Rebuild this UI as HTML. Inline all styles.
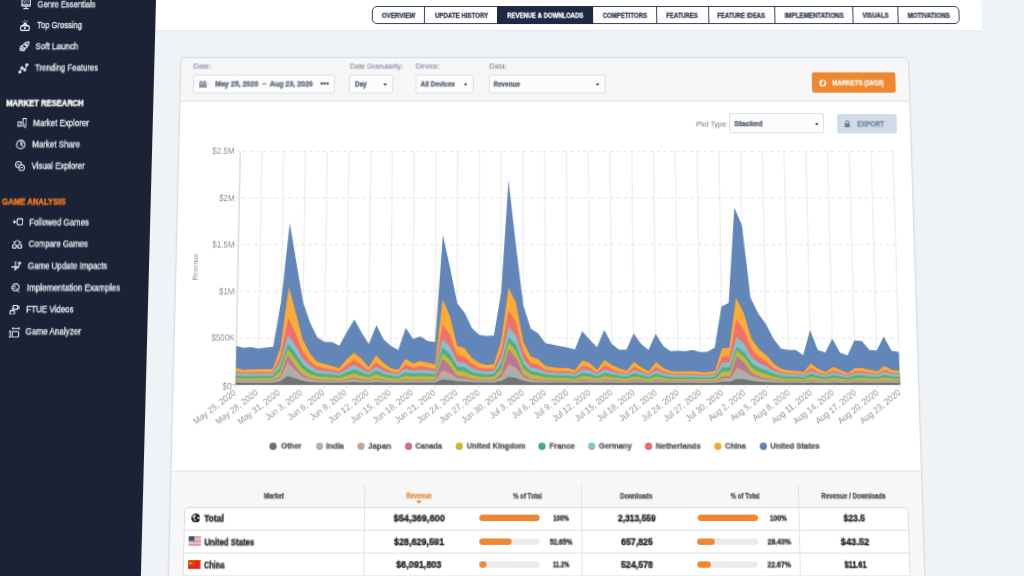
<!DOCTYPE html>
<html lang="en"><head><meta charset="utf-8"><title>Revenue &amp; Downloads</title>
<style>
html,body{margin:0;padding:0;width:1024px;height:576px;overflow:hidden;background:#eff3f6;}
body{font-family:"Liberation Sans",Arial,sans-serif;position:relative;}
#stage{position:absolute;left:0;top:0;width:1100px;height:640px;transform-origin:0 0;transform:matrix3d(1,0,0,0,-0.03826900,1,0,-0.00007700,0,0,1,0,0,0,0,1);background:#eff3f6;overflow:visible;filter:blur(0.2px);}
#stage div,#stage .a{position:absolute;box-sizing:border-box;}
.t{position:absolute;left:0;top:0;white-space:nowrap;transform-origin:0 50%;will-change:transform;display:block;margin:0;padding:0;}
</style></head><body>
<div id="stage">
<nav aria-label="Main navigation">
<div style="left:-10px;top:-10px;width:166px;height:670px;background:#1b2236;"></div>
<span class="t" style="transform:translate(37.65px,-1.64px) scaleX(0.7707);font-size:9.90px;line-height:11.88px;font-weight:400;color:#f8f9fb;-webkit-text-stroke:0.3px #f6f7fa;">Genre Essentials</span>
<span class="t" style="transform:translate(37.99px,19.07px) scaleX(0.7695);font-size:9.88px;line-height:11.86px;font-weight:400;color:#f8f9fb;-webkit-text-stroke:0.3px #f6f7fa;">Top Grossing</span>
<span class="t" style="transform:translate(37.14px,40.16px) scaleX(0.8119);font-size:9.86px;line-height:11.84px;font-weight:400;color:#f8f9fb;-webkit-text-stroke:0.3px #f6f7fa;">Soft Launch</span>
<span class="t" style="transform:translate(37.33px,61.34px) scaleX(0.7830);font-size:9.85px;line-height:11.82px;font-weight:400;color:#f8f9fb;-webkit-text-stroke:0.3px #f6f7fa;">Trending Features</span>
<span class="t" style="transform:translate(37.40px,115.87px) scaleX(0.8004);font-size:9.81px;line-height:11.77px;font-weight:400;color:#f8f9fb;-webkit-text-stroke:0.3px #f6f7fa;">Market Explorer</span>
<span class="t" style="transform:translate(37.29px,136.68px) scaleX(0.8060);font-size:9.79px;line-height:11.75px;font-weight:400;color:#f8f9fb;-webkit-text-stroke:0.3px #f6f7fa;">Market Share</span>
<span class="t" style="transform:translate(37.49px,157.67px) scaleX(0.7997);font-size:9.78px;line-height:11.73px;font-weight:400;color:#f8f9fb;-webkit-text-stroke:0.3px #f6f7fa;">Visual Explorer</span>
<span class="t" style="transform:translate(37.15px,212.52px) scaleX(0.8047);font-size:9.73px;line-height:11.68px;font-weight:400;color:#f8f9fb;-webkit-text-stroke:0.3px #f6f7fa;">Followed Games</span>
<span class="t" style="transform:translate(37.39px,233.30px) scaleX(0.7832);font-size:9.72px;line-height:11.66px;font-weight:400;color:#f8f9fb;-webkit-text-stroke:0.3px #f6f7fa;">Compare Games</span>
<span class="t" style="transform:translate(37.24px,254.44px) scaleX(0.8036);font-size:9.70px;line-height:11.64px;font-weight:400;color:#f8f9fb;-webkit-text-stroke:0.3px #f6f7fa;">Game Update Impacts</span>
<span class="t" style="transform:translate(36.99px,275.47px) scaleX(0.8209);font-size:9.69px;line-height:11.62px;font-weight:400;color:#f8f9fb;-webkit-text-stroke:0.3px #f6f7fa;">Implementation Examples</span>
<span class="t" style="transform:translate(37.22px,296.09px) scaleX(0.8068);font-size:9.67px;line-height:11.60px;font-weight:400;color:#f8f9fb;-webkit-text-stroke:0.3px #f6f7fa;">FTUE Videos</span>
<span class="t" style="transform:translate(37.32px,317.18px) scaleX(0.8217);font-size:9.65px;line-height:11.58px;font-weight:400;color:#f8f9fb;-webkit-text-stroke:0.3px #f6f7fa;">Game Analyzer</span>
<span class="t" style="transform:translate(10.13px,97.20px) scaleX(0.8093);font-size:9.33px;line-height:11.19px;font-weight:700;color:#ffffff;-webkit-text-stroke:0.37px #ffffff;-webkit-text-stroke:0.5px #fff;">MARKET RESEARCH</span>
<span class="t" style="transform:translate(9.63px,193.52px) scaleX(0.8250);font-size:9.26px;line-height:11.11px;font-weight:700;color:#f47b20;-webkit-text-stroke:0.37px #f47b20;-webkit-text-stroke:0.5px #f47b20;">GAME ANALYSIS</span>
<svg class="a" style="left:20.76px;top:-1.03px;" width="10.65" height="10.64" viewBox="0 0 20 20" preserveAspectRatio="none"><g fill="none" stroke="#f1f2f7" stroke-width="2.3" stroke-linecap="round" stroke-linejoin="round" opacity="0.88"><rect x="2" y="1" width="16" height="12.5" rx="1.5"/><path d="M2.5 11h15" stroke-width="2.6"/><path d="M10 13.5v4M6 18.2h8"/><path d="M5 4l3 2-3 2M9 4h2M13 4l2 2-2 2M9 8h2" stroke-width="1.2"/></g></svg>
<svg class="a" style="left:21.13px;top:19.87px;" width="9.98" height="10.96" viewBox="0 0 20 20" preserveAspectRatio="none"><g fill="none" stroke="#f1f2f7" stroke-width="2.3" stroke-linecap="round" stroke-linejoin="round" opacity="1"><rect x="1.5" y="10.5" width="17" height="8.5" rx="2.2"/><circle cx="10" cy="14.8" r="2" fill="#f1f2f7" stroke="none"/><path d="M5.5 10l4.5-5 4.5 5M10 5v3"/><path d="M5 2.5l.8 1M14 1.5l-.5 1.5M9.5 0.8v.8" stroke-width="1.4"/></g></svg>
<svg class="a" style="left:20.91px;top:41.17px;" width="10.36" height="10.52" viewBox="0 0 20 20" preserveAspectRatio="none"><g fill="none" stroke="#f1f2f7" stroke-width="2.2" stroke-linecap="round" stroke-linejoin="round" opacity="1"><path d="M18.5 1.5C12 1.500 7.500 5 5.500 10.500L9.500 14.500C15 12.500 18.500 8 18.500 1.500Z"/><circle cx="12.800" cy="7.200" r="1.700"/><path d="M6.500 8.500L2 10.500l1.500 3M11.500 13.500L9.500 18l-3-1.500M2 18l3.500-3.500M1.500 14.500l1-1M5.500 18.500l1-1"/></g></svg>
<svg class="a" style="left:21.39px;top:62.50px;" width="9.65" height="10.29" viewBox="0 0 20 20" preserveAspectRatio="none"><g fill="none" stroke="#f1f2f7" stroke-width="1.2" stroke-linecap="round" stroke-linejoin="round" opacity="1"><path d="M3 17l4-8.500 6 4.500 4-10" stroke-width="2"/><circle cx="3" cy="17" r="2.500" fill="#f1f2f7"/><circle cx="7" cy="8.500" r="2.300" fill="#f1f2f7"/><circle cx="13" cy="13" r="2.300" fill="#f1f2f7"/><circle cx="17" cy="3" r="2.500" fill="#f1f2f7"/></g></svg>
<svg class="a" style="left:21.52px;top:117.23px;" width="9.31" height="10.01" viewBox="0 0 20 20" preserveAspectRatio="none"><g fill="none" stroke="#f1f2f7" stroke-width="2.2" stroke-linecap="round" stroke-linejoin="round" opacity="1"><rect x="1" y="7.500" width="6" height="8.500"/><path d="M11.500 9V1h7.500v15h-3"/><circle cx="10.400" cy="12.500" r="3.400" fill="#1b2236" stroke-width="1.900"/><path d="M13 15.300l4.500 4.200" stroke-width="2"/></g></svg>
<svg class="a" style="left:20.90px;top:138.02px;" width="10.09" height="9.98" viewBox="0 0 20 20" preserveAspectRatio="none"><g fill="none" stroke="#f1f2f7" stroke-width="2.2" stroke-linecap="round" stroke-linejoin="round" opacity="1"><circle cx="10" cy="10" r="8.200"/><path d="M10 3.500v6.500l4 3.500M10 10l4.500-4.500" stroke-width="2"/></g></svg>
<svg class="a" style="left:21.08px;top:158.93px;" width="10.07" height="9.94" viewBox="0 0 20 20" preserveAspectRatio="none"><g fill="none" stroke="#f1f2f7" stroke-width="2.1" stroke-linecap="round" stroke-linejoin="round" opacity="1"><rect x="1.500" y="1.500" width="11" height="11" rx="3.500"/><rect x="8" y="8" width="10.500" height="10.500" rx="3.500" fill="#1b2236"/><path d="M4 8l2-2.500 2 2M11 14l1.500-2 1.500 2 1.500-1.500" stroke-width="1.500"/></g></svg>
<svg class="a" style="left:20.95px;top:213.39px;" width="10.32" height="10.15" viewBox="0 0 20 20" preserveAspectRatio="none"><g fill="none" stroke="#f1f2f7" stroke-width="2.3" stroke-linecap="round" stroke-linejoin="round" opacity="1"><path d="M0.800 10h4.400M3 7.800v4.400" stroke-width="2.2"/><rect x="8" y="4.300" width="11" height="11.400" rx="3" stroke-width="2.3"/></g></svg>
<svg class="a" style="left:20.95px;top:235.16px;" width="10.11" height="9.25" viewBox="0 0 20 20" preserveAspectRatio="none"><g fill="none" stroke="#f1f2f7" stroke-width="2.3" stroke-linecap="round" stroke-linejoin="round" opacity="1"><rect x="1.200" y="11" width="7.400" height="7.600" rx="3.200"/><rect x="11.400" y="11" width="7.400" height="7.600" rx="3.200"/><path d="M4.500 7C5.500 0.500 14.500 0.500 15.500 7M4.500 7.200l-2.200-2M4.500 7.200l2.600-1.200M15.500 7.200l2.200-2M15.500 7.200l-2.600-1.200" stroke-width="1.700"/></g></svg>
<svg class="a" style="left:21.15px;top:256.05px;" width="9.51" height="9.41" viewBox="0 0 20 20" preserveAspectRatio="none"><g fill="none" stroke="#f1f2f7" stroke-width="2.3" stroke-linecap="round" stroke-linejoin="round" opacity="1"><path d="M8.500 1v18M0.800 12h14.500" stroke-width="2.300"/><path d="M8.500 16.500C14 14.500 17 9 17 2.500M17 1.800l-3 3M17 1.800l2.600 3.200" stroke-width="2.200"/></g></svg>
<svg class="a" style="left:21.25px;top:276.96px;" width="9.59" height="9.57" viewBox="0 0 20 20" preserveAspectRatio="none"><g fill="none" stroke="#f1f2f7" stroke-width="2.1" stroke-linecap="round" stroke-linejoin="round" opacity="1"><path d="M6 2.500l6-1.500 5 4 .5 6-4.500 4.500-6.500-.5-4-5z"/><path d="M6 6.500l3 1 1-2.500M5.500 11l3.500-.5M11.500 10.500l7 8" stroke-width="1.700"/></g></svg>
<svg class="a" style="left:21.35px;top:297.72px;" width="9.67" height="9.73" viewBox="0 0 20 20" preserveAspectRatio="none"><g fill="none" stroke="#f1f2f7" stroke-width="2.2" stroke-linecap="round" stroke-linejoin="round" opacity="1"><rect x="6.500" y="1" width="9.500" height="7.500" rx="2"/><path d="M16 3.500l3-1.500v6l-3-1.500" stroke-width="1.600"/><rect x="1" y="11" width="9" height="7.500" rx="2"/><path d="M4.500 11C4.500 7.500 6 6 8 5.500" stroke-width="1.600"/></g></svg>
<svg class="a" style="left:21.37px;top:318.87px;" width="10.34" height="10.27" viewBox="0 0 20 20" preserveAspectRatio="none"><g fill="none" stroke="#f1f2f7" stroke-width="2.3" stroke-linecap="round" stroke-linejoin="round" opacity="1"><path d="M0.600 8h3.600M2.400 8v11M0.600 19h3.600" stroke-width="1.800"/><rect x="6.300" y="8.200" width="12.400" height="10.600" rx="2.800" stroke-width="2"/><path d="M7.300 2.600h12M7.300 0.600v4M19.300 0.600v4" stroke-width="1.700"/></g></svg>
</nav>
<header>
<div  style="left:156.27px;top:-2.00px;width:824.51px;height:32.03px;background:#fff;box-shadow:0 1px 1.5px rgba(100,110,130,.07);"></div>
<div  style="left:372.44px;top:5.90px;width:586.83px;height:17.76px;border:1px solid #39425c;border-radius:5px;background:#fff;"></div>
<div  style="left:497.20px;top:5.90px;width:96.19px;height:17.76px;background:#1f2943;"></div>
<div  style="left:424.38px;top:6.50px;width:1.00px;height:16.46px;background:#39425c;"></div>
<div  style="left:656.02px;top:6.50px;width:1.00px;height:16.46px;background:#39425c;"></div>
<div  style="left:707.76px;top:6.50px;width:1.00px;height:16.46px;background:#39425c;"></div>
<div  style="left:774.19px;top:6.50px;width:1.00px;height:16.46px;background:#39425c;"></div>
<div  style="left:852.40px;top:6.50px;width:1.00px;height:16.46px;background:#39425c;"></div>
<div  style="left:897.35px;top:6.50px;width:1.00px;height:16.46px;background:#39425c;"></div>
<span class="t" style="transform:translate(381.87px,11.81px) scaleX(0.9326);font-size:6.69px;line-height:8.03px;font-weight:700;color:#2b3450;-webkit-text-stroke:0.27px #2b3450;">OVERVIEW</span>
<span class="t" style="transform:translate(435.08px,11.81px) scaleX(0.9133);font-size:6.69px;line-height:8.03px;font-weight:700;color:#2b3450;-webkit-text-stroke:0.27px #2b3450;">UPDATE HISTORY</span>
<span class="t" style="transform:translate(507.19px,11.74px) scaleX(0.8888);font-size:6.69px;line-height:8.03px;font-weight:700;color:#ffffff;-webkit-text-stroke:0.27px #ffffff;">REVENUE &amp; DOWNLOADS</span>
<span class="t" style="transform:translate(602.57px,11.81px) scaleX(0.9076);font-size:6.69px;line-height:8.03px;font-weight:700;color:#2b3450;-webkit-text-stroke:0.27px #2b3450;">COMPETITORS</span>
<span class="t" style="transform:translate(666.09px,11.81px) scaleX(0.8869);font-size:6.69px;line-height:8.03px;font-weight:700;color:#2b3450;-webkit-text-stroke:0.27px #2b3450;">FEATURES</span>
<span class="t" style="transform:translate(717.03px,11.81px) scaleX(0.8919);font-size:6.69px;line-height:8.03px;font-weight:700;color:#2b3450;-webkit-text-stroke:0.27px #2b3450;">FEATURE IDEAS</span>
<span class="t" style="transform:translate(784.36px,11.72px) scaleX(0.9241);font-size:6.69px;line-height:8.03px;font-weight:700;color:#2b3450;-webkit-text-stroke:0.27px #2b3450;">IMPLEMENTATIONS</span>
<span class="t" style="transform:translate(861.96px,11.60px) scaleX(0.9047);font-size:6.69px;line-height:8.03px;font-weight:700;color:#2b3450;-webkit-text-stroke:0.27px #2b3450;">VISUALS</span>
<span class="t" style="transform:translate(907.20px,11.81px) scaleX(0.9245);font-size:6.69px;line-height:8.03px;font-weight:700;color:#2b3450;-webkit-text-stroke:0.27px #2b3450;">MOTIVATIONS</span>
</header>
<main>
<div style="left:182.4px;top:56.8px;width:724.3px;height:600px;background:#fff;border:1px solid #d9dee4;border-radius:6px 6px 0 0;box-shadow:0 0 2px rgba(120,140,160,.18);overflow:hidden;"><div style="left:0;top:0;width:100%;height:43.3px;background:#f7f7f7;border-bottom:1px solid #e3e5e8;"></div><div style="left:0;top:396.3px;width:100%;height:300px;background:#f7f7f7;border-top:1px solid #e3e5e8;"></div></div>
<span class="t" style="transform:translate(194.85px,62.27px) scaleX(1.1639);font-size:6.37px;line-height:7.64px;font-weight:400;color:#66758a;">Date:</span>
<span class="t" style="transform:translate(350.85px,62.36px) scaleX(1.0933);font-size:6.37px;line-height:7.64px;font-weight:400;color:#66758a;">Date Granularity:</span>
<span class="t" style="transform:translate(416.14px,62.23px) scaleX(1.1211);font-size:6.37px;line-height:7.64px;font-weight:400;color:#66758a;">Device:</span>
<span class="t" style="transform:translate(489.44px,62.26px) scaleX(1.1213);font-size:6.37px;line-height:7.64px;font-weight:400;color:#66758a;">Data:</span>
<div  style="left:194.55px;top:73.88px;width:141.59px;height:18.95px;background:#fcfcfc;border:1px solid #dde0e4;border-radius:2px;"></div>
<div  style="left:350.35px;top:73.88px;width:43.62px;height:18.95px;background:#fcfcfc;border:1px solid #dde0e4;border-radius:2px;"></div>
<div  style="left:415.73px;top:73.88px;width:58.12px;height:18.95px;background:#fcfcfc;border:1px solid #dde0e4;border-radius:2px;"></div>
<div  style="left:488.65px;top:73.88px;width:116.55px;height:18.95px;background:#fcfcfc;border:1px solid #dde0e4;border-radius:2px;"></div>
<span class="t" style="transform:translate(217.02px,79.75px) scaleX(1.0680);font-size:6.56px;line-height:7.87px;font-weight:700;color:#4f5b6e;-webkit-text-stroke:0.26px #4f5b6e;white-space:pre;">May 25, 2020  –  Aug 23, 2020</span>
<span class="t" style="transform:translate(321.33px,78.89px) scaleX(1.0918);font-size:7.45px;line-height:8.94px;font-weight:700;color:#4f5b6e;-webkit-text-stroke:0.30px #4f5b6e;">•••</span>
<span class="t" style="transform:translate(355.92px,79.85px) scaleX(0.9834);font-size:6.56px;line-height:7.87px;font-weight:700;color:#4f5b6e;-webkit-text-stroke:0.26px #4f5b6e;">Day</span>
<span class="t" style="transform:translate(421.07px,79.83px) scaleX(0.9745);font-size:6.56px;line-height:7.87px;font-weight:700;color:#4f5b6e;-webkit-text-stroke:0.26px #4f5b6e;">All Devices</span>
<span class="t" style="transform:translate(493.60px,79.96px) scaleX(0.9622);font-size:6.56px;line-height:7.87px;font-weight:700;color:#4f5b6e;-webkit-text-stroke:0.26px #4f5b6e;">Revenue</span>
<svg class="a" style="left:384.13px;top:82.67px;" width="3.78" height="2.17" viewBox="0 0 10 6" preserveAspectRatio="none"><path d="M0 0H10L5 6Z" fill="#333"/></svg>
<svg class="a" style="left:463.62px;top:82.67px;" width="3.78" height="2.17" viewBox="0 0 10 6" preserveAspectRatio="none"><path d="M0 0H10L5 6Z" fill="#333"/></svg>
<svg class="a" style="left:595.16px;top:82.67px;" width="3.78" height="2.17" viewBox="0 0 10 6" preserveAspectRatio="none"><path d="M0 0H10L5 6Z" fill="#333"/></svg>
<svg class="a" style="left:201.21px;top:79.51px;" width="7.65" height="7.80" viewBox="0 0 14 14" preserveAspectRatio="none"><path d="M0.300 2.400h13.400v11.300h-13.400z M2.800 0h2.400v3h-2.400z M8.800 0h2.400v3h-2.400z" fill="#838ca0"/><path d="M0.300 5.300h13.400" stroke="#e9ebef" stroke-width="1"/><path d="M0.300 8.300h13.400M0.300 11h13.400M4.700 5.800v7.900M9.300 5.800v7.900" stroke="#9aa2b3" stroke-width=".5"/></svg>
<div  style="left:810.01px;top:72.39px;width:83.07px;height:19.55px;background:#ef8730;border-radius:2px;"></div>
<span class="t" style="transform:translate(830.27px,78.52px) scaleX(0.9530);font-size:6.36px;line-height:7.63px;font-weight:700;color:#fff;-webkit-text-stroke:0.25px #fff;">MARKETS (19/19)</span>
<svg class="a" style="left:817.16px;top:78.52px;" width="7.35" height="7.31" viewBox="0 0 16 16" preserveAspectRatio="none"><circle cx="8" cy="8" r="7.6" fill="#fff"/><path d="M5 2.5l3 1.5-1 2.5-3 1 .5 2.5 2.5 1v3l2-.5 1.5-3 2.5-1-2-3 2-1.5-2-2.5z" fill="#ef8730"/></svg>
<span class="t" style="transform:translate(694.31px,119.39px) scaleX(1.0879);font-size:6.54px;line-height:7.84px;font-weight:400;color:#66758a;">Plot Type:</span>
<div  style="left:727.01px;top:112.42px;width:93.91px;height:19.82px;background:#fcfcfc;border:1px solid #dde0e4;border-radius:2px;"></div>
<span class="t" style="transform:translate(731.95px,117.92px) scaleX(0.9713);font-size:7.53px;line-height:9.03px;font-weight:700;color:#4f5b6e;-webkit-text-stroke:0.30px #4f5b6e;">Stacked</span>
<svg class="a" style="left:811.59px;top:121.85px;" width="3.76" height="2.16" viewBox="0 0 10 6" preserveAspectRatio="none"><path d="M0 0H10L5 6Z" fill="#333"/></svg>
<div  style="left:833.99px;top:112.61px;width:59.04px;height:19.82px;background:#cfdbe6;border-radius:2px;"></div>
<span class="t" style="transform:translate(853.83px,119.22px) scaleX(0.9570);font-size:6.74px;line-height:8.08px;font-weight:700;color:#75849a;-webkit-text-stroke:0.27px #75849a;">EXPORT</span>
<svg class="a" style="left:840.73px;top:118.90px;" width="5.94" height="7.26" viewBox="0 0 12 15" preserveAspectRatio="none"><path d="M1 6.5h10v8H1z" fill="#6c7a90"/><path d="M3 7V4.2a3 3 0 0 1 6 0V7" fill="none" stroke="#6c7a90" stroke-width="1.8"/></svg>
<svg class="a" style="left:0;top:0" width="1100" height="640" viewBox="0 0 1100 640" font-family="Liberation Sans, Arial, sans-serif"><path d="M243.14 149.56V374.13" stroke="#c6c6c6" stroke-width="0.9" fill="none"/><path d="M264.64 149.56V374.13" stroke="#e6e6e6" stroke-width="0.9" fill="none"/><path d="M286.15 149.56V374.13" stroke="#e6e6e6" stroke-width="0.9" fill="none"/><path d="M307.65 149.56V374.13" stroke="#e6e6e6" stroke-width="0.9" fill="none"/><path d="M329.16 149.56V374.13" stroke="#e6e6e6" stroke-width="0.9" fill="none"/><path d="M350.66 149.56V374.13" stroke="#e6e6e6" stroke-width="0.9" fill="none"/><path d="M372.17 149.56V374.13" stroke="#e6e6e6" stroke-width="0.9" fill="none"/><path d="M393.67 149.56V374.13" stroke="#e6e6e6" stroke-width="0.9" fill="none"/><path d="M415.17 149.56V374.13" stroke="#e6e6e6" stroke-width="0.9" fill="none"/><path d="M436.68 149.56V374.13" stroke="#e6e6e6" stroke-width="0.9" fill="none"/><path d="M458.18 149.56V374.13" stroke="#e6e6e6" stroke-width="0.9" fill="none"/><path d="M479.69 149.56V374.13" stroke="#e6e6e6" stroke-width="0.9" fill="none"/><path d="M501.19 149.56V374.13" stroke="#e6e6e6" stroke-width="0.9" fill="none"/><path d="M522.70 149.56V374.13" stroke="#e6e6e6" stroke-width="0.9" fill="none"/><path d="M544.20 149.56V374.13" stroke="#e6e6e6" stroke-width="0.9" fill="none"/><path d="M565.70 149.56V374.13" stroke="#e6e6e6" stroke-width="0.9" fill="none"/><path d="M587.21 149.56V374.13" stroke="#e6e6e6" stroke-width="0.9" fill="none"/><path d="M608.71 149.56V374.13" stroke="#e6e6e6" stroke-width="0.9" fill="none"/><path d="M630.22 149.56V374.13" stroke="#e6e6e6" stroke-width="0.9" fill="none"/><path d="M651.72 149.56V374.13" stroke="#e6e6e6" stroke-width="0.9" fill="none"/><path d="M673.23 149.56V374.13" stroke="#e6e6e6" stroke-width="0.9" fill="none"/><path d="M694.73 149.56V374.13" stroke="#e6e6e6" stroke-width="0.9" fill="none"/><path d="M716.24 149.56V374.13" stroke="#e6e6e6" stroke-width="0.9" fill="none"/><path d="M737.74 149.56V374.13" stroke="#e6e6e6" stroke-width="0.9" fill="none"/><path d="M759.24 149.56V374.13" stroke="#e6e6e6" stroke-width="0.9" fill="none"/><path d="M780.75 149.56V374.13" stroke="#e6e6e6" stroke-width="0.9" fill="none"/><path d="M802.25 149.56V374.13" stroke="#e6e6e6" stroke-width="0.9" fill="none"/><path d="M823.76 149.56V374.13" stroke="#e6e6e6" stroke-width="0.9" fill="none"/><path d="M845.26 149.56V374.13" stroke="#e6e6e6" stroke-width="0.9" fill="none"/><path d="M866.77 149.56V374.13" stroke="#e6e6e6" stroke-width="0.9" fill="none"/><path d="M888.27 149.56V374.13" stroke="#e6e6e6" stroke-width="0.9" fill="none"/><path d="M239.14 329.45H888.27" stroke="#e0e0e0" stroke-width="0.9" stroke-dasharray="3.2 3.4" fill="none"/><path d="M239.14 284.95H888.27" stroke="#e0e0e0" stroke-width="0.9" stroke-dasharray="3.2 3.4" fill="none"/><path d="M239.14 240.14H888.27" stroke="#e0e0e0" stroke-width="0.9" stroke-dasharray="3.2 3.4" fill="none"/><path d="M239.14 195.01H888.27" stroke="#e0e0e0" stroke-width="0.9" stroke-dasharray="3.2 3.4" fill="none"/><path d="M239.14 149.56H888.27" stroke="#e0e0e0" stroke-width="0.9" stroke-dasharray="3.2 3.4" fill="none"/><polygon points="243.14,373.63 243.14,336.96 250.31,338.78 257.48,337.95 264.64,339.44 271.81,338.45 278.98,337.79 286.15,293.87 293.32,219.06 300.48,258.10 307.65,295.66 314.82,315.16 321.99,328.88 329.16,333.33 336.33,333.33 343.49,336.80 350.66,323.42 357.83,311.84 365.00,324.25 372.17,335.31 379.33,317.31 386.50,330.86 393.67,336.96 400.84,340.75 408.01,319.79 415.17,330.36 422.34,328.05 429.51,332.18 436.68,333.33 443.85,230.69 451.02,262.58 458.18,296.55 465.35,305.22 472.52,320.12 479.69,326.40 486.86,327.55 494.02,327.06 501.19,284.95 508.36,177.77 515.53,240.14 522.70,298.33 529.86,320.45 537.03,325.08 544.20,334.16 551.37,335.81 558.54,337.13 565.70,338.61 572.87,340.26 580.04,323.09 587.21,330.86 594.38,338.28 601.55,321.77 608.71,334.98 615.88,340.42 623.05,340.42 630.22,325.08 637.39,334.98 644.55,340.75 651.72,325.57 658.89,336.96 666.06,342.07 673.23,341.58 680.39,341.91 687.56,340.75 694.73,342.73 701.90,342.40 709.07,338.61 716.24,299.41 723.40,296.10 730.57,204.33 737.74,221.40 744.91,291.20 752.08,306.05 759.24,315.98 766.41,330.03 773.58,339.60 780.75,340.75 787.92,340.75 795.08,345.70 802.25,321.77 809.42,340.75 816.59,343.23 823.76,330.03 830.93,343.23 838.09,346.03 845.26,331.68 852.43,332.18 859.60,340.75 866.77,341.25 873.93,328.05 881.10,341.58 888.27,342.73 888.27,373.63" fill="#6286b7"/><polygon points="243.14,373.63 243.14,357.71 250.31,359.68 257.48,359.19 264.64,359.02 271.81,359.02 278.98,358.86 286.15,338.28 293.32,280.47 300.48,305.22 307.65,330.86 314.82,344.05 321.99,351.95 329.16,353.93 336.33,355.90 343.49,358.04 350.66,349.81 357.83,343.23 365.00,348.99 372.17,357.21 379.33,345.70 386.50,353.10 393.67,358.04 400.84,359.68 408.01,349.15 415.17,353.60 422.34,351.13 429.51,352.77 436.68,354.75 443.85,292.77 451.02,308.53 458.18,336.63 465.35,339.11 472.52,348.17 479.69,353.10 486.86,355.08 494.02,354.25 501.19,331.68 508.36,281.14 515.53,296.10 522.70,333.33 529.86,347.01 537.03,349.48 544.20,355.90 551.37,357.21 558.54,358.04 565.70,357.71 572.87,360.01 580.04,350.64 587.21,353.10 594.38,359.68 601.55,350.14 608.71,355.08 615.88,358.37 623.05,360.50 630.22,351.95 637.39,357.21 644.55,360.99 651.72,352.28 658.89,358.04 666.06,360.83 673.23,361.32 680.39,361.32 687.56,360.83 694.73,361.82 701.90,361.82 709.07,360.50 716.24,339.11 723.40,338.78 730.57,291.11 737.74,305.22 744.91,330.03 752.08,339.93 759.24,345.70 766.41,353.93 773.58,358.86 780.75,360.17 787.92,360.50 795.08,361.65 802.25,353.43 809.42,358.86 816.59,361.65 823.76,356.72 830.93,359.68 838.09,362.64 845.26,357.71 852.43,358.04 859.60,359.68 866.77,360.99 873.93,356.06 881.10,359.68 888.27,360.50 888.27,373.63" fill="#fcab35"/><polygon points="243.14,373.63 243.14,360.78 250.31,362.28 257.48,361.90 264.64,361.78 271.81,361.78 278.98,361.65 286.15,346.66 293.32,310.15 300.48,324.63 307.65,341.44 314.82,350.82 321.99,356.58 329.16,357.99 336.33,359.44 343.49,361.03 350.66,355.06 357.83,350.08 365.00,354.44 372.17,360.41 379.33,351.94 386.50,357.40 393.67,361.03 400.84,362.28 408.01,354.56 415.17,357.76 422.34,356.00 429.51,357.17 436.68,358.59 443.85,316.49 451.02,326.33 458.18,345.42 465.35,347.19 472.52,353.84 479.69,357.40 486.86,358.83 494.02,358.23 501.19,341.13 508.36,303.23 515.53,314.31 522.70,342.39 529.86,352.90 537.03,354.81 544.20,359.44 551.37,360.41 558.54,361.03 565.70,360.78 572.87,362.53 580.04,355.65 587.21,357.40 594.38,362.28 601.55,355.31 608.71,358.83 615.88,361.28 623.05,362.91 630.22,356.58 637.39,360.41 644.55,363.29 651.72,356.81 658.89,361.03 666.06,363.16 673.23,363.54 680.39,363.54 687.56,363.16 694.73,363.94 701.90,363.94 709.07,362.91 716.24,346.88 723.40,346.63 730.57,311.51 737.74,321.69 744.91,340.04 752.08,347.51 759.24,351.91 766.41,357.99 773.58,361.65 780.75,362.65 787.92,362.91 795.08,363.81 802.25,357.64 809.42,361.65 816.59,363.81 823.76,360.05 830.93,362.28 838.09,364.62 845.26,360.78 852.43,361.03 859.60,362.28 866.77,363.29 873.93,359.56 881.10,362.28 888.27,362.91 888.27,373.63" fill="#f0706b"/><polygon points="243.14,373.63 243.14,362.47 250.31,363.56 257.48,363.28 264.64,363.19 271.81,363.19 278.98,363.09 286.15,352.40 293.32,326.39 300.48,336.21 307.65,348.46 314.82,355.59 321.99,359.75 329.16,360.61 336.33,361.54 343.49,362.64 350.66,358.88 357.83,355.02 365.00,358.39 372.17,362.21 379.33,356.45 386.50,360.24 393.67,362.64 400.84,363.56 408.01,358.49 415.17,360.46 422.34,359.42 429.51,360.10 436.68,360.98 443.85,330.34 451.02,337.28 458.18,351.44 465.35,352.80 472.52,357.92 479.69,360.24 486.86,361.14 494.02,360.76 501.19,347.94 508.36,318.76 515.53,327.20 522.70,348.92 529.86,357.17 537.03,358.68 544.20,361.54 551.37,362.21 558.54,362.64 565.70,362.47 572.87,363.75 580.04,359.23 587.21,360.24 594.38,363.56 601.55,359.04 608.71,361.14 615.88,362.82 623.05,364.04 630.22,359.75 637.39,362.21 644.55,364.33 651.72,359.89 658.89,362.64 666.06,364.23 673.23,364.53 680.39,364.53 687.56,364.23 694.73,364.89 701.90,364.89 709.07,364.04 716.24,352.70 723.40,352.51 730.57,328.37 737.74,334.95 744.91,347.67 752.08,353.16 759.24,356.47 766.41,360.61 773.58,363.09 780.75,363.84 787.92,364.04 795.08,364.77 802.25,360.38 809.42,363.09 816.59,364.77 823.76,361.95 830.93,363.56 838.09,365.50 845.26,362.47 852.43,362.64 859.60,363.56 866.77,364.33 873.93,361.62 881.10,363.56 888.27,364.04 888.27,373.63" fill="#86c0c8"/><polygon points="243.14,373.63 243.14,364.81 250.31,365.63 257.48,365.42 264.64,365.35 271.81,365.35 278.98,365.28 286.15,357.05 293.32,334.67 300.48,343.54 307.65,353.85 314.82,359.60 321.99,362.83 329.16,363.43 336.33,364.11 343.49,364.94 350.66,362.21 357.83,359.15 365.00,361.83 372.17,364.61 379.33,360.29 386.50,363.17 393.67,364.94 400.84,365.63 408.01,361.90 415.17,363.33 422.34,362.60 429.51,363.07 436.68,363.71 443.85,338.26 451.02,344.41 458.18,356.26 465.35,357.35 472.52,361.46 479.69,363.17 486.86,363.82 494.02,363.54 501.19,353.45 508.36,328.71 515.53,336.08 522.70,354.25 529.86,360.86 537.03,362.05 544.20,364.11 551.37,364.61 558.54,364.94 565.70,364.81 572.87,365.78 580.04,362.46 587.21,363.17 594.38,365.63 601.55,362.34 608.71,363.82 615.88,365.07 623.05,366.00 630.22,362.83 637.39,364.61 644.55,366.22 651.72,362.92 658.89,364.94 666.06,366.15 673.23,366.38 680.39,366.38 687.56,366.15 694.73,366.66 701.90,366.66 709.07,366.00 716.24,357.34 723.40,357.19 730.57,337.45 737.74,342.97 744.91,353.33 752.08,357.71 759.24,360.32 766.41,363.43 773.58,365.28 780.75,365.85 787.92,366.00 795.08,366.57 802.25,363.27 809.42,365.28 816.59,366.57 823.76,364.42 830.93,365.63 838.09,367.15 845.26,364.81 852.43,364.94 859.60,365.63 866.77,366.22 873.93,364.17 881.10,365.63 888.27,366.00 888.27,373.63" fill="#57ab86"/><polygon points="243.14,373.63 243.14,367.17 250.31,367.79 257.48,367.63 264.64,367.58 271.81,367.58 278.98,367.53 286.15,361.06 293.32,339.97 300.48,349.08 307.65,358.39 314.82,363.13 321.99,365.67 329.16,366.13 336.33,366.65 343.49,367.27 350.66,365.18 357.83,362.75 365.00,364.88 372.17,367.03 379.33,363.67 386.50,365.93 393.67,367.27 400.84,367.79 408.01,364.94 415.17,366.05 422.34,365.49 429.51,365.85 436.68,366.34 443.85,344.08 451.02,350.03 458.18,360.42 465.35,361.32 472.52,364.59 479.69,365.93 486.86,366.43 494.02,366.22 501.19,357.91 508.36,333.84 515.53,341.52 522.70,358.60 529.86,364.11 537.03,365.06 544.20,366.65 551.37,367.03 558.54,367.27 565.70,367.17 572.87,367.90 580.04,365.38 587.21,365.93 594.38,367.79 601.55,365.28 608.71,366.43 615.88,367.37 623.05,368.06 630.22,365.67 637.39,367.03 644.55,368.23 651.72,365.74 658.89,367.27 666.06,368.18 673.23,368.35 680.39,368.35 687.56,368.18 694.73,368.55 701.90,368.55 709.07,368.06 716.24,361.15 723.40,361.02 730.57,341.25 737.74,347.40 744.91,357.61 752.08,361.46 759.24,363.65 766.41,366.13 773.58,367.53 780.75,367.95 787.92,368.06 795.08,368.48 802.25,366.01 809.42,367.53 816.59,368.48 823.76,366.88 830.93,367.79 838.09,368.91 845.26,367.17 852.43,367.27 859.60,367.79 866.77,368.23 873.93,366.70 881.10,367.79 888.27,368.06 888.27,373.63" fill="#c4ba3a"/><polygon points="243.14,373.63 243.14,369.35 250.31,369.65 257.48,369.56 264.64,369.54 271.81,369.54 278.98,369.51 286.15,365.83 293.32,345.83 300.48,355.48 307.65,363.76 314.82,367.34 321.99,368.84 329.16,368.95 336.33,369.13 343.49,369.39 350.66,368.75 357.83,367.02 365.00,368.54 372.17,369.28 379.33,367.69 386.50,368.90 393.67,369.39 400.84,369.65 408.01,368.58 415.17,368.93 422.34,368.81 429.51,368.88 436.68,369.02 443.85,349.00 451.02,355.57 458.18,365.19 465.35,365.90 472.52,368.34 479.69,368.90 486.86,369.05 494.02,368.98 501.19,363.25 508.36,339.94 515.53,348.01 522.70,363.81 529.86,368.00 537.03,368.66 544.20,369.13 551.37,369.28 558.54,369.39 565.70,369.35 572.87,369.70 580.04,368.80 587.21,368.90 594.38,369.65 601.55,368.80 608.71,369.05 615.88,369.44 623.05,369.79 630.22,368.84 637.39,369.28 644.55,369.88 651.72,368.86 658.89,369.39 666.06,369.85 673.23,369.95 680.39,369.95 687.56,369.85 694.73,370.09 701.90,370.09 709.07,369.79 716.24,365.77 723.40,365.67 730.57,346.53 737.74,353.18 744.91,362.87 752.08,366.02 759.24,367.66 766.41,368.95 773.58,369.51 780.75,369.73 787.92,369.79 795.08,370.04 802.25,368.92 809.42,369.51 816.59,370.04 823.76,369.22 830.93,369.65 838.09,370.34 845.26,369.35 852.43,369.39 859.60,369.65 866.77,369.88 873.93,369.15 881.10,369.65 888.27,369.79 888.27,373.63" fill="#b97896"/><polygon points="243.14,373.63 243.14,370.06 250.31,370.31 257.48,370.25 264.64,370.22 271.81,370.22 278.98,370.20 286.15,367.28 293.32,352.33 300.48,359.41 307.65,365.67 314.82,368.46 321.99,369.66 329.16,369.74 336.33,369.89 343.49,370.10 350.66,369.59 357.83,368.36 365.00,369.44 372.17,370.01 379.33,368.83 386.50,369.70 393.67,370.10 400.84,370.31 408.01,369.47 415.17,369.72 422.34,369.63 429.51,369.69 436.68,369.80 443.85,360.04 451.02,362.66 458.18,367.37 465.35,367.78 472.52,369.31 479.69,369.70 486.86,369.82 494.02,369.76 501.19,366.03 508.36,353.95 515.53,357.84 522.70,366.37 529.86,369.06 537.03,369.53 544.20,369.89 551.37,370.01 558.54,370.10 565.70,370.06 572.87,370.36 580.04,369.63 587.21,369.70 594.38,370.31 601.55,369.62 608.71,369.82 615.88,370.14 623.05,370.43 630.22,369.66 637.39,370.01 644.55,370.51 651.72,369.67 658.89,370.10 666.06,370.48 673.23,370.56 680.39,370.56 687.56,370.48 694.73,370.68 701.90,370.68 709.07,370.43 716.24,367.61 723.40,367.55 730.57,357.55 737.74,360.71 744.91,365.86 752.08,367.77 759.24,368.84 766.41,369.74 773.58,370.20 780.75,370.38 787.92,370.43 795.08,370.64 802.25,369.72 809.42,370.20 816.59,370.64 823.76,369.96 830.93,370.31 838.09,370.89 845.26,370.06 852.43,370.10 859.60,370.31 866.77,370.51 873.93,369.90 881.10,370.31 888.27,370.43 888.27,373.63" fill="#c8a596"/><polygon points="243.14,373.63 243.14,370.65 250.31,370.85 257.48,370.79 264.64,370.78 271.81,370.78 278.98,370.76 286.15,368.47 293.32,357.24 300.48,362.47 307.65,367.22 314.82,369.40 321.99,370.34 329.16,370.40 336.33,370.51 343.49,370.68 350.66,370.30 357.83,369.34 365.00,370.18 372.17,370.61 379.33,369.70 386.50,370.37 393.67,370.68 400.84,370.85 408.01,370.21 415.17,370.39 422.34,370.33 429.51,370.36 436.68,370.44 443.85,364.63 451.02,365.88 458.18,368.71 465.35,368.99 472.52,370.10 479.69,370.37 486.86,370.46 494.02,370.42 501.19,367.55 508.36,358.92 515.53,361.62 522.70,367.81 529.86,369.89 537.03,370.25 544.20,370.51 551.37,370.61 558.54,370.68 565.70,370.65 572.87,370.89 580.04,370.33 587.21,370.37 594.38,370.85 601.55,370.33 608.71,370.46 615.88,370.71 623.05,370.95 630.22,370.34 637.39,370.61 644.55,371.01 651.72,370.35 658.89,370.68 666.06,370.99 673.23,371.05 680.39,371.05 687.56,370.99 694.73,371.15 701.90,371.15 709.07,370.95 716.24,368.72 723.40,368.67 730.57,361.00 737.74,363.37 744.91,367.34 752.08,368.84 759.24,369.70 766.41,370.40 773.58,370.76 780.75,370.91 787.92,370.95 795.08,371.12 802.25,370.38 809.42,370.76 816.59,371.12 823.76,370.57 830.93,370.85 838.09,371.32 845.26,370.65 852.43,370.68 859.60,370.85 866.77,371.01 873.93,370.52 881.10,370.85 888.27,370.95 888.27,373.63" fill="#a5b3ad"/><polygon points="243.14,373.63 243.14,371.61 250.31,371.72 257.48,371.69 264.64,371.68 271.81,371.68 278.98,371.67 286.15,370.46 293.32,365.40 300.48,367.55 307.65,369.81 314.82,370.98 321.99,371.48 329.16,371.49 336.33,371.53 343.49,371.62 350.66,371.49 357.83,370.95 365.00,371.42 372.17,371.58 379.33,371.15 386.50,371.48 393.67,371.62 400.84,371.72 408.01,371.44 415.17,371.48 422.34,371.49 429.51,371.48 436.68,371.50 443.85,368.73 451.02,369.17 458.18,370.56 465.35,370.72 472.52,371.37 479.69,371.48 486.86,371.51 494.02,371.49 501.19,369.98 508.36,366.28 515.53,367.30 522.70,370.11 529.86,371.25 537.03,371.46 544.20,371.53 551.37,371.58 558.54,371.62 565.70,371.61 572.87,371.75 580.04,371.50 587.21,371.48 594.38,371.72 601.55,371.51 608.71,371.51 615.88,371.64 623.05,371.78 630.22,371.48 637.39,371.58 644.55,371.82 651.72,371.48 658.89,371.62 666.06,371.81 673.23,371.85 680.39,371.85 687.56,371.81 694.73,371.92 701.90,371.92 709.07,371.78 716.24,370.66 723.40,370.64 730.57,367.89 737.74,368.54 744.91,370.02 752.08,370.72 759.24,371.16 766.41,371.49 773.58,371.67 780.75,371.76 787.92,371.78 795.08,371.90 802.25,371.48 809.42,371.67 816.59,371.90 823.76,371.56 830.93,371.72 838.09,372.04 845.26,371.61 852.43,371.62 859.60,371.72 866.77,371.82 873.93,371.54 881.10,371.72 888.27,371.78 888.27,373.63" fill="#737373"/><path d="M239.14 373.63H243.14" stroke="#bbb" stroke-width="0.8"/><path d="M243.14 373.63v3.5" stroke="#e2e2e2" stroke-width="0.8"/><path d="M264.64 373.63v3.5" stroke="#e2e2e2" stroke-width="0.8"/><path d="M286.15 373.63v3.5" stroke="#e2e2e2" stroke-width="0.8"/><path d="M307.65 373.63v3.5" stroke="#e2e2e2" stroke-width="0.8"/><path d="M329.16 373.63v3.5" stroke="#e2e2e2" stroke-width="0.8"/><path d="M350.66 373.63v3.5" stroke="#e2e2e2" stroke-width="0.8"/><path d="M372.17 373.63v3.5" stroke="#e2e2e2" stroke-width="0.8"/><path d="M393.67 373.63v3.5" stroke="#e2e2e2" stroke-width="0.8"/><path d="M415.17 373.63v3.5" stroke="#e2e2e2" stroke-width="0.8"/><path d="M436.68 373.63v3.5" stroke="#e2e2e2" stroke-width="0.8"/><path d="M458.18 373.63v3.5" stroke="#e2e2e2" stroke-width="0.8"/><path d="M479.69 373.63v3.5" stroke="#e2e2e2" stroke-width="0.8"/><path d="M501.19 373.63v3.5" stroke="#e2e2e2" stroke-width="0.8"/><path d="M522.70 373.63v3.5" stroke="#e2e2e2" stroke-width="0.8"/><path d="M544.20 373.63v3.5" stroke="#e2e2e2" stroke-width="0.8"/><path d="M565.70 373.63v3.5" stroke="#e2e2e2" stroke-width="0.8"/><path d="M587.21 373.63v3.5" stroke="#e2e2e2" stroke-width="0.8"/><path d="M608.71 373.63v3.5" stroke="#e2e2e2" stroke-width="0.8"/><path d="M630.22 373.63v3.5" stroke="#e2e2e2" stroke-width="0.8"/><path d="M651.72 373.63v3.5" stroke="#e2e2e2" stroke-width="0.8"/><path d="M673.23 373.63v3.5" stroke="#e2e2e2" stroke-width="0.8"/><path d="M694.73 373.63v3.5" stroke="#e2e2e2" stroke-width="0.8"/><path d="M716.24 373.63v3.5" stroke="#e2e2e2" stroke-width="0.8"/><path d="M737.74 373.63v3.5" stroke="#e2e2e2" stroke-width="0.8"/><path d="M759.24 373.63v3.5" stroke="#e2e2e2" stroke-width="0.8"/><path d="M780.75 373.63v3.5" stroke="#e2e2e2" stroke-width="0.8"/><path d="M802.25 373.63v3.5" stroke="#e2e2e2" stroke-width="0.8"/><path d="M823.76 373.63v3.5" stroke="#e2e2e2" stroke-width="0.8"/><path d="M845.26 373.63v3.5" stroke="#e2e2e2" stroke-width="0.8"/><path d="M866.77 373.63v3.5" stroke="#e2e2e2" stroke-width="0.8"/><path d="M888.27 373.63v3.5" stroke="#e2e2e2" stroke-width="0.8"/><text x="239.25" y="377.70" font-size="8.94" text-anchor="end" fill="#939393" textLength="8.65" lengthAdjust="spacingAndGlyphs">$0</text><text x="241.24" y="332.01" font-size="8.97" text-anchor="end" fill="#939393" textLength="22.56" lengthAdjust="spacingAndGlyphs">$500K</text><text x="240.35" y="287.52" font-size="9.00" text-anchor="end" fill="#939393" textLength="15.23" lengthAdjust="spacingAndGlyphs">$1M</text><text x="239.44" y="242.72" font-size="9.03" text-anchor="end" fill="#939393" textLength="21.83" lengthAdjust="spacingAndGlyphs">$1.5M</text><text x="238.53" y="197.60" font-size="9.06" text-anchor="end" fill="#939393" textLength="15.34" lengthAdjust="spacingAndGlyphs">$2M</text><text x="237.61" y="152.15" font-size="9.09" text-anchor="end" fill="#939393" textLength="21.99" lengthAdjust="spacingAndGlyphs">$2.5M</text><text transform="translate(244.14 382.43) rotate(-37)" font-size="8.64" text-anchor="end" fill="#939393" textLength="48.42" lengthAdjust="spacingAndGlyphs">May 25, 2020</text><text transform="translate(265.64 382.43) rotate(-37)" font-size="8.64" text-anchor="end" fill="#939393" textLength="48.42" lengthAdjust="spacingAndGlyphs">May 28, 2020</text><text transform="translate(287.15 382.43) rotate(-37)" font-size="8.64" text-anchor="end" fill="#939393" textLength="48.42" lengthAdjust="spacingAndGlyphs">May 31, 2020</text><text transform="translate(308.65 382.43) rotate(-37)" font-size="8.64" text-anchor="end" fill="#939393" textLength="41.77" lengthAdjust="spacingAndGlyphs">Jun 3, 2020</text><text transform="translate(330.16 382.43) rotate(-37)" font-size="8.64" text-anchor="end" fill="#939393" textLength="41.77" lengthAdjust="spacingAndGlyphs">Jun 6, 2020</text><text transform="translate(351.66 382.43) rotate(-37)" font-size="8.64" text-anchor="end" fill="#939393" textLength="41.77" lengthAdjust="spacingAndGlyphs">Jun 9, 2020</text><text transform="translate(373.17 382.43) rotate(-37)" font-size="8.64" text-anchor="end" fill="#939393" textLength="46.21" lengthAdjust="spacingAndGlyphs">Jun 12, 2020</text><text transform="translate(394.67 382.43) rotate(-37)" font-size="8.64" text-anchor="end" fill="#939393" textLength="46.21" lengthAdjust="spacingAndGlyphs">Jun 15, 2020</text><text transform="translate(416.17 382.43) rotate(-37)" font-size="8.64" text-anchor="end" fill="#939393" textLength="46.21" lengthAdjust="spacingAndGlyphs">Jun 18, 2020</text><text transform="translate(437.68 382.43) rotate(-37)" font-size="8.64" text-anchor="end" fill="#939393" textLength="46.21" lengthAdjust="spacingAndGlyphs">Jun 21, 2020</text><text transform="translate(459.18 382.43) rotate(-37)" font-size="8.64" text-anchor="end" fill="#939393" textLength="46.21" lengthAdjust="spacingAndGlyphs">Jun 24, 2020</text><text transform="translate(480.69 382.43) rotate(-37)" font-size="8.64" text-anchor="end" fill="#939393" textLength="46.21" lengthAdjust="spacingAndGlyphs">Jun 27, 2020</text><text transform="translate(502.19 382.43) rotate(-37)" font-size="8.64" text-anchor="end" fill="#939393" textLength="46.21" lengthAdjust="spacingAndGlyphs">Jun 30, 2020</text><text transform="translate(523.70 382.43) rotate(-37)" font-size="8.64" text-anchor="end" fill="#939393" textLength="39.10" lengthAdjust="spacingAndGlyphs">Jul 3, 2020</text><text transform="translate(545.20 382.43) rotate(-37)" font-size="8.64" text-anchor="end" fill="#939393" textLength="39.10" lengthAdjust="spacingAndGlyphs">Jul 6, 2020</text><text transform="translate(566.70 382.43) rotate(-37)" font-size="8.64" text-anchor="end" fill="#939393" textLength="39.10" lengthAdjust="spacingAndGlyphs">Jul 9, 2020</text><text transform="translate(588.21 382.43) rotate(-37)" font-size="8.64" text-anchor="end" fill="#939393" textLength="43.54" lengthAdjust="spacingAndGlyphs">Jul 12, 2020</text><text transform="translate(609.71 382.43) rotate(-37)" font-size="8.64" text-anchor="end" fill="#939393" textLength="43.54" lengthAdjust="spacingAndGlyphs">Jul 15, 2020</text><text transform="translate(631.22 382.43) rotate(-37)" font-size="8.64" text-anchor="end" fill="#939393" textLength="43.54" lengthAdjust="spacingAndGlyphs">Jul 18, 2020</text><text transform="translate(652.72 382.43) rotate(-37)" font-size="8.64" text-anchor="end" fill="#939393" textLength="43.54" lengthAdjust="spacingAndGlyphs">Jul 21, 2020</text><text transform="translate(674.23 382.43) rotate(-37)" font-size="8.64" text-anchor="end" fill="#939393" textLength="43.54" lengthAdjust="spacingAndGlyphs">Jul 24, 2020</text><text transform="translate(695.73 382.43) rotate(-37)" font-size="8.64" text-anchor="end" fill="#939393" textLength="43.54" lengthAdjust="spacingAndGlyphs">Jul 27, 2020</text><text transform="translate(717.24 382.43) rotate(-37)" font-size="8.64" text-anchor="end" fill="#939393" textLength="43.54" lengthAdjust="spacingAndGlyphs">Jul 30, 2020</text><text transform="translate(738.74 382.43) rotate(-37)" font-size="8.64" text-anchor="end" fill="#939393" textLength="43.10" lengthAdjust="spacingAndGlyphs">Aug 2, 2020</text><text transform="translate(760.24 382.43) rotate(-37)" font-size="8.64" text-anchor="end" fill="#939393" textLength="43.10" lengthAdjust="spacingAndGlyphs">Aug 5, 2020</text><text transform="translate(781.75 382.43) rotate(-37)" font-size="8.64" text-anchor="end" fill="#939393" textLength="43.10" lengthAdjust="spacingAndGlyphs">Aug 8, 2020</text><text transform="translate(803.25 382.43) rotate(-37)" font-size="8.64" text-anchor="end" fill="#939393" textLength="46.95" lengthAdjust="spacingAndGlyphs">Aug 11, 2020</text><text transform="translate(824.76 382.43) rotate(-37)" font-size="8.64" text-anchor="end" fill="#939393" textLength="47.55" lengthAdjust="spacingAndGlyphs">Aug 14, 2020</text><text transform="translate(846.26 382.43) rotate(-37)" font-size="8.64" text-anchor="end" fill="#939393" textLength="47.55" lengthAdjust="spacingAndGlyphs">Aug 17, 2020</text><text transform="translate(867.77 382.43) rotate(-37)" font-size="8.64" text-anchor="end" fill="#939393" textLength="47.55" lengthAdjust="spacingAndGlyphs">Aug 20, 2020</text><text transform="translate(889.27 382.43) rotate(-37)" font-size="8.64" text-anchor="end" fill="#939393" textLength="47.55" lengthAdjust="spacingAndGlyphs">Aug 23, 2020</text><text transform="translate(204.32 261.62) rotate(-90)" font-size="6.47" text-anchor="middle" fill="#939393">Revenue</text></svg>
<div  style="left:277.34px;top:427.64px;width:7.15px;height:6.92px;background:#6e6e6e;border-radius:50%;"></div>
<span class="t" style="transform:translate(288.27px,426.48px) scaleX(0.9338);font-size:7.93px;line-height:9.51px;font-weight:700;color:#555555;-webkit-text-stroke:0.32px #555555;">Other</span>
<div  style="left:321.81px;top:427.64px;width:7.15px;height:6.92px;background:#a7b6ae;border-radius:50%;"></div>
<span class="t" style="transform:translate(331.68px,426.60px) scaleX(0.9369);font-size:7.93px;line-height:9.51px;font-weight:700;color:#555555;-webkit-text-stroke:0.32px #555555;">India</span>
<div  style="left:362.32px;top:427.64px;width:7.15px;height:6.92px;background:#c9a596;border-radius:50%;"></div>
<span class="t" style="transform:translate(372.28px,426.67px) scaleX(0.9790);font-size:7.93px;line-height:9.51px;font-weight:700;color:#555555;-webkit-text-stroke:0.32px #555555;">Japan</span>
<div  style="left:407.86px;top:427.64px;width:7.15px;height:6.92px;background:#cb6f96;border-radius:50%;"></div>
<span class="t" style="transform:translate(418.01px,426.54px) scaleX(0.9014);font-size:7.93px;line-height:9.51px;font-weight:700;color:#555555;-webkit-text-stroke:0.32px #555555;">Canada</span>
<div  style="left:457.17px;top:427.64px;width:7.15px;height:6.92px;background:#c9b92e;border-radius:50%;"></div>
<span class="t" style="transform:translate(467.70px,426.47px) scaleX(0.9295);font-size:7.93px;line-height:9.51px;font-weight:700;color:#555555;-webkit-text-stroke:0.32px #555555;">United Kingdom</span>
<div  style="left:537.22px;top:427.64px;width:7.15px;height:6.92px;background:#4ea679;border-radius:50%;"></div>
<span class="t" style="transform:translate(547.61px,426.59px) scaleX(0.9502);font-size:7.93px;line-height:9.51px;font-weight:700;color:#555555;-webkit-text-stroke:0.32px #555555;">France</span>
<div  style="left:585.08px;top:427.64px;width:7.15px;height:6.92px;background:#87bfc9;border-radius:50%;"></div>
<span class="t" style="transform:translate(595.34px,426.50px) scaleX(0.9307);font-size:7.93px;line-height:9.51px;font-weight:700;color:#555555;-webkit-text-stroke:0.32px #555555;">Germany</span>
<div  style="left:640.09px;top:427.64px;width:7.15px;height:6.92px;background:#ed6868;border-radius:50%;"></div>
<span class="t" style="transform:translate(650.55px,426.62px) scaleX(0.9456);font-size:7.93px;line-height:9.51px;font-weight:700;color:#555555;-webkit-text-stroke:0.32px #555555;">Netherlands</span>
<div  style="left:707.18px;top:427.64px;width:7.15px;height:6.92px;background:#fba72c;border-radius:50%;"></div>
<span class="t" style="transform:translate(717.47px,426.55px) scaleX(0.9105);font-size:7.93px;line-height:9.51px;font-weight:700;color:#555555;-webkit-text-stroke:0.32px #555555;">China</span>
<div  style="left:750.50px;top:427.64px;width:7.15px;height:6.92px;background:#5b84b8;border-radius:50%;"></div>
<span class="t" style="transform:translate(761.22px,426.59px) scaleX(0.9389);font-size:7.93px;line-height:9.51px;font-weight:700;color:#555555;-webkit-text-stroke:0.32px #555555;">United States</span>
<span class="t" style="transform:translate(272.48px,474.05px) scaleX(0.8863);font-size:6.74px;line-height:8.09px;font-weight:700;color:#4a4a4a;-webkit-text-stroke:0.27px #4a4a4a;">Market</span>
<span class="t" style="transform:translate(409.58px,473.86px) scaleX(0.8731);font-size:6.74px;line-height:8.09px;font-weight:700;color:#ef8730;-webkit-text-stroke:0.27px #ef8730;">Revenue</span>
<span class="t" style="transform:translate(512.46px,474.15px) scaleX(0.8728);font-size:6.74px;line-height:8.09px;font-weight:700;color:#4a4a4a;-webkit-text-stroke:0.27px #4a4a4a;">% of Total</span>
<span class="t" style="transform:translate(615.54px,474.13px) scaleX(0.8643);font-size:6.74px;line-height:8.09px;font-weight:700;color:#4a4a4a;-webkit-text-stroke:0.27px #4a4a4a;">Downloads</span>
<span class="t" style="transform:translate(722.06px,474.08px) scaleX(0.8753);font-size:6.74px;line-height:8.09px;font-weight:700;color:#4a4a4a;-webkit-text-stroke:0.27px #4a4a4a;">% of Total</span>
<span class="t" style="transform:translate(809.44px,474.11px) scaleX(0.8902);font-size:6.74px;line-height:8.09px;font-weight:700;color:#4a4a4a;-webkit-text-stroke:0.27px #4a4a4a;">Revenue / Downloads</span>
<svg class="a" style="left:419.21px;top:482.30px;" width="5.58" height="2.78" viewBox="0 0 10 6" preserveAspectRatio="none"><path d="M0 0H10L5 6Z" fill="#ef8730"/></svg>
<div  style="left:196.41px;top:487.58px;width:696.91px;height:85.92px;background:#fff;border:1px solid #dcdfe3;border-radius:4px;"></div>
<div  style="left:196.27px;top:508.57px;width:697.35px;height:1.11px;background:#dfe1e4;"></div>
<div  style="left:196.78px;top:529.86px;width:696.16px;height:1.10px;background:#dfe1e4;"></div>
<div  style="left:197.29px;top:550.99px;width:694.98px;height:1.10px;background:#dfe1e4;"></div>
<div  style="left:369.23px;top:466.61px;width:0.96px;height:106.89px;background:#e2e4e7;"></div>
<div  style="left:578.02px;top:466.61px;width:0.96px;height:106.89px;background:#e2e4e7;"></div>
<div  style="left:787.09px;top:466.61px;width:0.96px;height:106.89px;background:#e2e4e7;"></div>
<span class="t" style="transform:translate(215.32px,493.56px) scaleX(0.9768);font-size:8.46px;line-height:10.15px;font-weight:700;color:#1e1e1e;-webkit-text-stroke:0.34px #1e1e1e;">Total</span>
<span class="t" style="transform:translate(397.44px,493.26px) scaleX(0.9637);font-size:9.23px;line-height:11.08px;font-weight:700;color:#1e1e1e;-webkit-text-stroke:0.37px #1e1e1e;">$54,369,600</span>
<span class="t" style="transform:translate(613.28px,493.23px) scaleX(0.8831);font-size:9.23px;line-height:11.08px;font-weight:700;color:#1e1e1e;-webkit-text-stroke:0.37px #1e1e1e;">2,313,559</span>
<span class="t" style="transform:translate(830.19px,493.23px) scaleX(0.8924);font-size:9.23px;line-height:11.08px;font-weight:700;color:#1e1e1e;-webkit-text-stroke:0.37px #1e1e1e;">$23.5</span>
<span class="t" style="transform:translate(550.96px,494.59px) scaleX(0.8826);font-size:6.73px;line-height:8.08px;font-weight:700;color:#1e1e1e;-webkit-text-stroke:0.27px #1e1e1e;">100%</span>
<span class="t" style="transform:translate(759.41px,494.61px) scaleX(0.9456);font-size:6.73px;line-height:8.08px;font-weight:700;color:#1e1e1e;-webkit-text-stroke:0.27px #1e1e1e;">100%</span>
<div  style="left:480.17px;top:495.36px;width:58.18px;height:5.73px;background:#ececec;border-radius:4px;"></div>
<div  style="left:480.17px;top:495.36px;width:58.18px;height:5.73px;background:#ef8730;border-radius:4px;"></div>
<div  style="left:689.62px;top:495.36px;width:58.56px;height:5.73px;background:#ececec;border-radius:4px;"></div>
<div  style="left:689.62px;top:495.36px;width:58.56px;height:5.73px;background:#ef8730;border-radius:4px;"></div>
<span class="t" style="transform:translate(216.12px,515.49px) scaleX(0.8861);font-size:8.45px;line-height:10.14px;font-weight:700;color:#1e1e1e;-webkit-text-stroke:0.34px #1e1e1e;">United States</span>
<span class="t" style="transform:translate(398.07px,515.07px) scaleX(0.9384);font-size:9.22px;line-height:11.06px;font-weight:700;color:#1e1e1e;-webkit-text-stroke:0.37px #1e1e1e;">$28,629,591</span>
<span class="t" style="transform:translate(616.13px,515.07px) scaleX(0.9106);font-size:9.22px;line-height:11.06px;font-weight:700;color:#1e1e1e;-webkit-text-stroke:0.37px #1e1e1e;">657,825</span>
<span class="t" style="transform:translate(826.83px,515.07px) scaleX(0.9792);font-size:9.22px;line-height:11.06px;font-weight:700;color:#1e1e1e;-webkit-text-stroke:0.37px #1e1e1e;">$43.52</span>
<span class="t" style="transform:translate(547.63px,516.62px) scaleX(0.9552);font-size:6.72px;line-height:8.06px;font-weight:700;color:#1e1e1e;-webkit-text-stroke:0.27px #1e1e1e;">52.65%</span>
<span class="t" style="transform:translate(756.68px,516.45px) scaleX(0.9922);font-size:6.72px;line-height:8.06px;font-weight:700;color:#1e1e1e;-webkit-text-stroke:0.27px #1e1e1e;">28.43%</span>
<div  style="left:480.20px;top:517.24px;width:58.08px;height:5.71px;background:#ececec;border-radius:4px;"></div>
<div  style="left:480.20px;top:517.24px;width:30.58px;height:5.71px;background:#ef8730;border-radius:4px;"></div>
<div  style="left:689.28px;top:517.24px;width:58.46px;height:5.71px;background:#ececec;border-radius:4px;"></div>
<div  style="left:689.28px;top:517.24px;width:16.62px;height:5.71px;background:#ef8730;border-radius:4px;"></div>
<span class="t" style="transform:translate(216.31px,536.46px) scaleX(0.8347);font-size:8.43px;line-height:10.12px;font-weight:700;color:#1e1e1e;-webkit-text-stroke:0.34px #1e1e1e;">China</span>
<span class="t" style="transform:translate(400.32px,536.00px) scaleX(0.9430);font-size:9.20px;line-height:11.04px;font-weight:700;color:#1e1e1e;-webkit-text-stroke:0.37px #1e1e1e;">$6,091,803</span>
<span class="t" style="transform:translate(615.75px,536.06px) scaleX(0.9257);font-size:9.20px;line-height:11.04px;font-weight:700;color:#1e1e1e;-webkit-text-stroke:0.37px #1e1e1e;">524,578</span>
<span class="t" style="transform:translate(829.94px,536.05px) scaleX(0.7712);font-size:9.20px;line-height:11.04px;font-weight:700;color:#1e1e1e;-webkit-text-stroke:0.37px #1e1e1e;">$11.61</span>
<span class="t" style="transform:translate(550.60px,537.36px) scaleX(0.8394);font-size:6.71px;line-height:8.05px;font-weight:700;color:#1e1e1e;-webkit-text-stroke:0.27px #1e1e1e;">11.2%</span>
<span class="t" style="transform:translate(756.14px,537.49px) scaleX(0.9979);font-size:6.71px;line-height:8.05px;font-weight:700;color:#1e1e1e;-webkit-text-stroke:0.27px #1e1e1e;">22.67%</span>
<div  style="left:480.23px;top:538.23px;width:57.98px;height:5.69px;background:#ececec;border-radius:4px;"></div>
<div  style="left:480.23px;top:538.23px;width:6.49px;height:5.69px;background:#ef8730;border-radius:4px;"></div>
<div  style="left:688.95px;top:538.23px;width:58.36px;height:5.69px;background:#ececec;border-radius:4px;"></div>
<div  style="left:688.95px;top:538.23px;width:13.23px;height:5.69px;background:#ef8730;border-radius:4px;"></div>
<svg class="a" style="left:202.64px;top:493.97px;" width="8.75" height="8.51" viewBox="0 0 16 16" preserveAspectRatio="none"><circle cx="8" cy="8" r="7.800" fill="#1c1c1c"/><path d="M5.200 2.200l2.600.800.400 1.800-1.800 1-1.400 1.600 1.800 1.600 1.400 2.600-.800 2.400-1.600-2.200-1-2.800-2-1.800.200-2.600z" fill="#fff"/><path d="M11.400 5.400l2 1.200.400 2.400-1.600 1.200-1.400-1.800z" fill="#fff"/></svg>
<svg class="a" style="left:201.33px;top:515.40px;" width="11.81" height="9.12" viewBox="0 0 26 18" preserveAspectRatio="none"><rect width="26" height="18" fill="#f3e9ea"/><rect y="0.00" width="26" height="1.4" fill="#d9737f"/><rect y="2.77" width="26" height="1.4" fill="#d9737f"/><rect y="5.54" width="26" height="1.4" fill="#d9737f"/><rect y="8.31" width="26" height="1.4" fill="#d9737f"/><rect y="11.08" width="26" height="1.4" fill="#d9737f"/><rect y="13.85" width="26" height="1.4" fill="#d9737f"/><rect y="16.62" width="26" height="1.4" fill="#d9737f"/><rect width="12" height="8.4" fill="#3b4f86"/></svg>
<svg class="a" style="left:201.35px;top:536.67px;" width="11.79" height="8.82" viewBox="0 0 26 18" preserveAspectRatio="none"><rect width="26" height="18" fill="#de2a10"/><path d="M5 2.2l.9 2.6h2.7l-2.2 1.6.8 2.6L5 7.4 2.8 9l.8-2.6L1.4 4.8h2.7z" fill="#ffde00"/><circle cx="9.5" cy="2.2" r=".8" fill="#ffde00"/><circle cx="11.3" cy="4.2" r=".8" fill="#ffde00"/><circle cx="11.3" cy="6.8" r=".8" fill="#ffde00"/><circle cx="9.5" cy="8.8" r=".8" fill="#ffde00"/></svg>
</main>
</div>
</body></html>
